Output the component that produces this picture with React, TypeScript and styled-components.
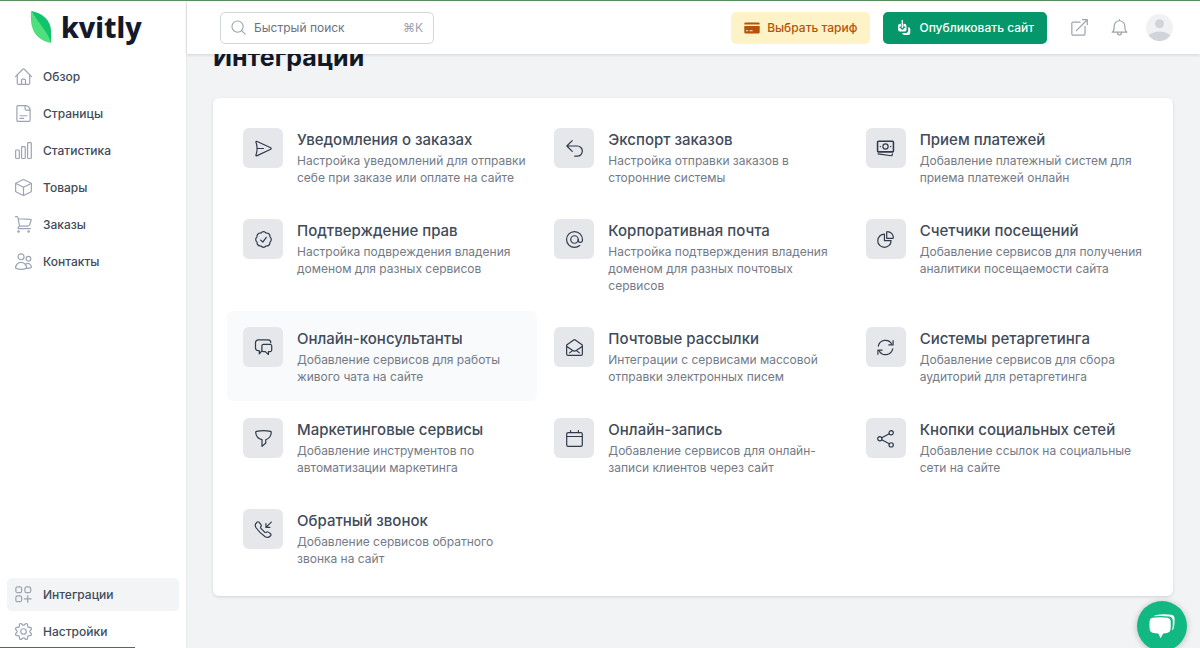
import React from "react";
import styled, { createGlobalStyle } from "styled-components";

const GlobalStyle = createGlobalStyle`
  *, *::before, *::after { box-sizing: border-box; }
  body {
    margin: 0;
    background: #f2f3f5;
    color: #414b5a;
    font-family: Inter, "Liberation Sans", sans-serif;
    font-size: 12px;
    line-height: 17px;
  }
  a { color: inherit; text-decoration: none; }
  h1, h2, p, ul { margin: 0; padding: 0; }
  button, input { font: inherit; }
`;

const Shell = styled.div`
  display: grid;
  grid-template-columns: 187px minmax(0, 1fr);
  min-height: 100vh;
  border-top: 1px solid #5a8f62;
`;

const Sidebar = styled.aside`
  position: sticky;
  top: 0;
  display: flex;
  flex-direction: column;
  height: calc(100vh - 1px);
  padding: 0 7px;
  background: #fff;
  border-right: 1px solid #e8eaed;
`;

const Brand = styled.a`
  display: flex;
  align-items: center;
  gap: 9px;
  height: 52px;
  margin-bottom: 7px;
  padding-left: 23px;
  color: #14192b;
  font-family: "Noto Sans", "Open Sans", sans-serif;
  font-size: 28px;
  font-weight: 800;
  line-height: 40px;
`;

const NavList = styled.ul<{ $bottom?: boolean }>`
  display: flex;
  flex-direction: column;
  gap: 4px;
  list-style: none;
  margin-top: ${(p) => (p.$bottom ? "auto" : "0")};
`;

const NavLink = styled.a<{ $active?: boolean }>`
  display: flex;
  align-items: center;
  gap: 11px;
  height: 33px;
  padding: 0 8px;
  border-radius: 5px;
  background: ${(p) => (p.$active ? "#f2f4f5" : "transparent")};
  font-weight: 500;
  svg { color: #9ca3b2; }
`;

const Column = styled.div`
  display: flex;
  flex-direction: column;
  min-width: 0;
`;

const Header = styled.header`
  position: sticky;
  top: 0;
  z-index: 2;
  display: flex;
  align-items: center;
  justify-content: space-between;
  height: 53px;
  padding: 0 27px 0 33px;
  background: #fff;
  box-shadow: 0 1px 3px rgba(17, 24, 39, 0.14);
`;

const SearchBox = styled.label`
  display: flex;
  align-items: center;
  gap: 8px;
  width: 214px;
  height: 32px;
  padding: 0 10px;
  border: 1px solid #d3d6dd;
  border-radius: 5px;
  color: #9ca3af;
`;

const SearchInput = styled.input`
  flex: 1;
  min-width: 0;
  padding: 0;
  border: 0;
  outline: 0;
  background: transparent;
  &::placeholder { color: #6b7280; opacity: 1; }
`;

const Shortcut = styled.kbd`
  font-family: Inter, "DejaVu Sans", sans-serif;
  font-size: 12px;
`;

const Actions = styled.div`
  display: flex;
  align-items: center;
  gap: 13px;
`;

const ActionButton = styled.button<{ $primary?: boolean }>`
  display: flex;
  align-items: center;
  gap: 7px;
  height: 32px;
  padding: 0 13px;
  border: 0;
  border-radius: 5px;
  background: ${(p) => (p.$primary ? "#059669" : "#fef3c7")};
  color: ${(p) => (p.$primary ? "#fff" : "#b45309")};
  font-weight: 500;
  cursor: pointer;
`;

const Tools = styled.div`
  display: flex;
  align-items: center;
  gap: 13px;
  margin-left: 6px;
`;

const IconButton = styled.button`
  display: grid;
  place-items: center;
  width: 27px;
  height: 27px;
  padding: 0;
  border: 0;
  border-radius: 50%;
  background: transparent;
  color: #9ca3af;
  cursor: pointer;
`;

const Main = styled.main`
  flex: 1;
  overflow: hidden;
  padding: 0 27px 40px 26px;
`;

const PageTitle = styled.h1`
  margin: -11px 0 27px;
  color: #111827;
  font-size: 25px;
  font-weight: 700;
  line-height: 28px;
`;

const Card = styled.section`
  display: grid;
  grid-template-columns: repeat(3, minmax(0, 1fr));
  gap: 1px;
  padding: 14px 13px 13px 14px;
  border-radius: 6px;
  background: #fff;
  box-shadow: 0 1px 3px rgba(17, 24, 39, 0.14);
`;

const Integration = styled.a<{ $active?: boolean }>`
  display: flex;
  align-items: flex-start;
  gap: 14px;
  padding: 16px 6px 16px 16px;
  border-radius: 6px;
  background: ${(p) => (p.$active ? "#f9fafb" : "transparent")};
`;

const Tile = styled.span`
  display: grid;
  place-items: center;
  flex: none;
  width: 40px;
  height: 40px;
  border-radius: 6px;
  background: #e5e7eb;
  color: #303a4b;
`;

const ItemTitle = styled.h2`
  font-size: 15px;
  font-weight: 500;
  line-height: 24px;
`;

const ItemText = styled.p`
  color: #737a87;
`;

const ChatButton = styled.button`
  position: fixed;
  right: 13px;
  bottom: -3px;
  z-index: 3;
  display: grid;
  place-items: center;
  width: 50px;
  height: 50px;
  padding: 0;
  border: 0;
  border-radius: 50%;
  background: #12b881;
  box-shadow: 0 1px 6px rgba(0, 0, 0, 0.25);
  cursor: pointer;
`;

const StatusEdge = styled.div`
  position: fixed;
  left: 0;
  bottom: 0;
  z-index: 4;
  width: 135px;
  height: 1px;
  background: #5c665f;
`;

const icons = {
  home: (
    <>
      <path d="M.75 12.2 10.9 1.8a1.5 1.5 0 0 1 2.2 0l10.15 10.4" />
      <path d="M3.25 9.8v11.7a1.6 1.6 0 0 0 1.6 1.6h14.3a1.6 1.6 0 0 0 1.6-1.6V9.8" />
      <path d="M9.2 23v-5.600a1.600 1.600 0 0 1 1.600-1.600h2.400a1.600 1.600 0 0 1 1.600 1.600V23" />
    </>
  ),
  page: (
    <>
      <path d="M15 .75H4.3a1.6 1.6 0 0 0-1.6 1.6v19.3a1.6 1.6 0 0 0 1.6 1.6h15.4a1.6 1.6 0 0 0 1.6-1.6V7.2Q20.6 1.2 15 .75z" />
      <path d="M14.3.9v4.6a1.6 1.6 0 0 0 1.6 1.6h5.3M7 15.2h10M7 19h5.2" />
    </>
  ),
  bars: (
    <>
      <rect x=".9" y="11.3" width="5.2" height="12" rx="1.2" />
      <rect x="9.3" y="6.6" width="5.2" height="16.7" rx="1.2" />
      <rect x="17.8" y=".8" width="5.2" height="22.5" rx="1.2" />
    </>
  ),
  cube: (
    <>
      <path d="M11.1 1.1 1.8 5.7a1.5 1.5 0 0 0-.9 1.4v9.8a1.5 1.5 0 0 0 .9 1.4l9.3 4.6a2 2 0 0 0 1.8 0l9.3-4.6a1.5 1.5 0 0 0 .9-1.4V7.1a1.5 1.5 0 0 0-.9-1.4l-9.3-4.6a2 2 0 0 0-1.800 0z" />
      <path d="m1.3 6.3 10.7 5.3 10.7-5.3M12 11.6v11.5" />
    </>
  ),
  cart: (
    <>
      <path d="M.6 1h1.8a1.8 1.8 0 0 1 1.8 1.5L6.4 14.2h11.7a2.6 2.6 0 0 0 2.5-1.9l2.3-6.5a.9.9 0 0 0-.9-1.1L4.6 3.9M6.4 14.2l-2.1 2.3a.9.9 0 0 0 .7 1.4h16.7" />
      <circle cx="5" cy="21.8" r="1" />
      <circle cx="19.2" cy="21.8" r="1" />
    </>
  ),
  users: (
    <>
      <circle cx="8.6" cy="5.3" r="4.2" />
      <circle cx="19" cy="8" r="3.3" />
      <path d="M.8 21.2c0-4.6 3.4-8 7.8-8s7.8 3.4 7.8 8c-4.6 2.4-11 2.4-15.6 0z" />
      <path d="M15.6 15.5c3.6-2.1 7.6.6 7.6 4.9-1.9 1-4.3 1.3-6.8 1.2" />
    </>
  ),
  apps: (
    <>
      <rect x="1.2" y="1.2" width="8.2" height="8.2" rx="2.5" />
      <rect x="14" y="1.2" width="8.2" height="8.2" rx="2.5" />
      <rect x="1.2" y="14" width="8.2" height="8.2" rx="2.5" />
      <path d="M18 13.5v9.5M13.3 18.2h9.5" />
    </>
  ),
  gear: (
    <>
      <circle cx="12" cy="12" r="3.9" />
      <path d="M10.546 2.438a1.957 1.957 0 0 0 2.908 0L14.4 1.4a1.959 1.959 0 0 1 3.41 1.413l-.071 1.4a1.958 1.958 0 0 0 2.051 2.057l1.4-.071A1.959 1.959 0 0 1 22.6 9.606l-1.042.94a1.96 1.96 0 0 0 0 2.909l1.042.94a1.959 1.959 0 0 1-1.413 3.41l-1.4-.071a1.958 1.958 0 0 0-2.056 2.056l.071 1.4A1.959 1.959 0 0 1 14.4 22.6l-.941-1.041a1.959 1.959 0 0 0-2.908 0L9.606 22.6A1.959 1.959 0 0 1 6.2 21.192l.072-1.4a1.958 1.958 0 0 0-2.056-2.056l-1.4.071A1.958 1.958 0 0 1 1.4 14.4l1.041-.94a1.96 1.96 0 0 0 0-2.909L1.4 9.606A1.958 1.958 0 0 1 2.813 6.2l1.4.071a1.958 1.958 0 0 0 2.056-2.058l-.072-1.4A1.959 1.959 0 0 1 9.606 1.4z" />
    </>
  ),
  search: (
    <>
      <circle cx="10.5" cy="10.5" r="9" />
      <path d="m17 17 5.7 5.7" />
    </>
  ),
  external: (
    <>
      <path d="M13 4.3H3A1.8 1.8 0 0 0 1.2 6.1v15A1.8 1.8 0 0 0 3 22.9h15a1.8 1.8 0 0 0 1.8-1.8V10.5" />
      <path d="M7.5 16.5 23 1M16 1h7v7" />
    </>
  ),
  bell: (
    <>
      <path d="M12 2.500a7.500 7.500 0 0 1 7.500 7.500c0 7.100 2.300 8.500 3 8.500h-21c.7 0 3-1.400 3-8.500A7.500 7.500 0 0 1 12 2.500zM12 2.500V1" />
      <path d="M9.200 19a2.800 3.400 0 0 0 5.600 0" />
    </>
  ),
  send: (
    <>
      <path d="M2.3 1.8 22.2 11a1.1 1.1 0 0 1 0 2L2.3 22.400a.8.8 0 0 1-1-1C3.700 14.500 3.700 9 1.300 2.700a.8.8 0 0 1 1-.9z" />
      <path d="M3 12h9" />
    </>
  ),
  undo: <path d="M8.8.9 1.2 8.5l7.6 7.6M1.2 8.5h14.7a7.2 7.2 0 0 1 0 14.4h-3.6" />,
  money: (
    <>
      <rect x=".8" y="1.8" width="22.4" height="15" rx="1.3" strokeWidth="2.2" />
      <circle cx="12" cy="9.3" r="3.7" />
      <path d="M4.600 9.300h.3M19.100 9.300h.3M1.500 19.700l18.600 2.500a1.300 1.300 0 0 0 1.400-1.200l.1-1.400" />
    </>
  ),
  badge: (
    <>
      <path d="m8 12.9 3 2.7 4.9-6.7" />
      <path d="M23 12c0 1.5-.8 2.9-1.9 3.7a4.5 4.5 0 0 1-1.3 4.1 4.5 4.5 0 0 1-4.1 1.3A4.6 4.6 0 0 1 12 23a4.6 4.6 0 0 1-3.7-1.9 4.5 4.5 0 0 1-4.1-1.3 4.5 4.5 0 0 1-1.3-4.1A4.6 4.6 0 0 1 1 12c0-1.5.8-2.9 1.9-3.7a4.5 4.5 0 0 1 1.3-4.1 4.5 4.5 0 0 1 4.1-1.3A4.6 4.6 0 0 1 12 1c1.5 0 2.9.8 3.7 1.9a4.5 4.5 0 0 1 4.1 1.3 4.5 4.5 0 0 1 1.3 4.1A4.6 4.6 0 0 1 23 12z" />
    </>
  ),
  at: (
    <>
      <circle cx="12" cy="12" r="5.3" />
      <path d="M17.3 12v1.500a3 3 0 0 0 5.900 0V12A11.200 11.200 0 1 0 12 23.200c2.800 0 5.400-1 7.300-2.700" />
    </>
  ),
  pie: (
    <>
      <path d="M10.500 4.300A9.400 9.400 0 1 0 19.900 13.700h-9.400z" />
      <path d="M13.700 1.800a.9.9 0 0 1 1-.9 8.500 8.500 0 0 1 8.400 8.400.9.9 0 0 1-.9 1h-8.500z" />
    </>
  ),
  chat: (
    <>
      <path d="M9.2 17.3 6 21v-4.5H4.700a4 4 0 0 1-4-4V5.300a4 4 0 0 1 4-4h13.600a4 4 0 0 1 4 3.900" />
      <path d="M21.300 7.700H12a2.300 2.300 0 0 0-2.300 2.300v5.500a2.300 2.300 0 0 0 2.300 2.300h2.500l4.500 4v-4h2.300a2.300 2.300 0 0 0 2.300-2.300V10a2.300 2.300 0 0 0-2.300-2.300z" />
    </>
  ),
  mail: (
    <>
      <path d="M.9 9.300a2 2 0 0 1 1-1.700L10.900 1.400a2 2 0 0 1 2.200 0l9 6.200a2 2 0 0 1 1 1.700v11.900a1.800 1.800 0 0 1-1.800 1.800H2.700a1.800 1.800 0 0 1-1.800-1.800z" />
      <path d="m1.200 10.700 8.300 5.600a4.500 4.500 0 0 0 5 0l8.300-5.600M5 19.600l4.500-3.300M19 19.600l-4.500-3.300" />
    </>
  ),
  sync: (
    <>
      <path d="M1.8 10A10.300 10.300 0 0 1 21 7.500M22.200 14A10.300 10.300 0 0 1 3 16.500" />
      <path d="M22.700 2.300v6h-6M1.300 21.700v-6h6" />
    </>
  ),
  funnel: (
    <path d="M1 3.500C.9 2.600 1.400 2.200 2.200 2c6-1.300 13.600-1.300 19.600 0 .8.2 1.300.6 1.200 1.500-.4 5-3.500 8.800-7.800 10.200v4.700l-5.300 4.700v-9.400C4.500 12.300 1.400 8.500 1 3.500z" />
  ),
  calendar: (
    <>
      <rect x="1" y="3.700" width="22" height="19.300" rx="2" />
      <path d="M1 9.200h22M6.500 1v2.700M17.500 1v2.700" />
    </>
  ),
  share: (
    <>
      <circle cx="4" cy="12.300" r="3" />
      <circle cx="20" cy="4" r="3" />
      <circle cx="20" cy="21" r="3" />
      <path d="m6.700 10.900 10.600-5.500M6.700 13.700l10.600 5.800" />
    </>
  ),
  phone: (
    <>
      <path d="m14.400 22.200.1.1a5.500 5.500 0 0 0 6.800-.8l.8-.8a1.800 1.800 0 0 0 0-2.600l-3.300-2.400a1.800 1.800 0 0 0-2.600 0 1.800 1.800 0 0 1-2.600 0l-5.200-5.300a1.800 1.800 0 0 1 0-2.600 1.800 1.800 0 0 0 0-2.600L5.500 1.600a1.800 1.800 0 0 0-2.600 0l-.8.8a5.500 5.500 0 0 0-.8 6.800 47 47 0 0 0 13.100 13z" />
      <path d="m23 1.500-7.500 7.500M15.500 3.500V9H21" />
    </>
  ),
};

type IconName = keyof typeof icons;

const Icon = ({ name, size = 17, weight = 1.7 }: { name: IconName; size?: number; weight?: number }) => (
  <svg
    width={size}
    height={size}
    viewBox="0 0 24 24"
    fill="none"
    stroke="currentColor"
    strokeWidth={weight}
    strokeLinecap="round"
    strokeLinejoin="round"
    overflow="visible"
    aria-hidden="true"
  >
    {icons[name]}
  </svg>
);

const Leaf = () => (
  <svg width="22" height="34" viewBox="0 0 22 34" aria-hidden="true">
    <path d="M1 1C13 3 21 11 21 21v12z" fill="#0fc46b" />
    <path d="M1 1C0 17 3 29 21 33 18 22 10 15 1 1z" fill="#4fe07d" />
  </svg>
);

const CreditCard = () => (
  <svg width="16" height="12" viewBox="0 0 16 12" aria-hidden="true">
    <path fill="currentColor" d="M1.5.6h13A1.200 1.200 0 0 1 15.700 1.800V2.400H.3v-.6A1.200 1.200 0 0 1 1.500.6z" />
    <path fill="currentColor" fillRule="evenodd" d="M.3 4h15.400v6.200a1.300 1.300 0 0 1-1.300 1.300H1.600A1.300 1.300 0 0 1 .3 10.200zM2 8.200v1h2.200v-1zm3.600 0v1h3v-1z" />
  </svg>
);

const PublishIcon = () => (
  <svg width="16" height="17" viewBox="0 0 16 17" aria-hidden="true">
    <path
      fill="#fff"
      d="M4.300 4.800h.7v3.200L4 7.200 3.200 8.200 6.300 11l3-2.800-.8-1-1 .8V4.800h.8a2.200 2.200 0 0 1 2.200 2.200v3.400a2.200 2.200 0 0 1-2.200 2.200h-4A2.200 2.200 0 0 1 2.100 10.400V7a2.200 2.200 0 0 1 2.200-2.200z"
    />
    <path fill="none" stroke="#fff" strokeWidth="1.300" strokeLinecap="round" d="M6.300 1.500v7" />
    <path fill="#fff" d="M12.200 8q2.100.3 2.100 2.300v3.200a2.500 2.500 0 0 1-2.500 2.500H8.500q-2 0-2.400-2h3.300a2.800 2.800 0 0 0 2.800-2.800z" />
  </svg>
);

const Avatar = () => (
  <svg width="27" height="27" viewBox="0 0 27 27" aria-hidden="true">
    <circle cx="13.500" cy="13.500" r="13.500" fill="#f0f1f3" />
    <circle cx="13.500" cy="9.800" r="4.500" fill="#d1d5db" />
    <path d="M2.500 21.300c5.500-5.100 16.500-5.100 22 0a13.500 13.500 0 0 1-22 0z" fill="#d1d5db" />
  </svg>
);

const ChatBubbles = () => (
  <svg width="28" height="28" viewBox="0 0 28 28" aria-hidden="true">
    <path fill="#fff" d="M7 3.300Q15 1.300 23.500 2.800 26.500 3.300 26.600 7q.2 6-1 9.500-.6 1.600-1.600 1.800 1.200-4 .8-9.800-.3-3.700-3.600-4.100Q13 3.600 6 4.300z" />
    <path fill="#fff" d="M4.500 5.800q8-1.100 15.200 0 2.600.4 2.900 3 .5 5-.2 9.200-.4 2.300-2.700 2.800-2.200.5-4.500.6l-2.600 4.800-2.300-4.800q-3 0-5.800-.6-2.300-.5-2.700-2.800-.7-4.700-.2-9.200.3-2.600 2.900-3z" />
  </svg>
);

const mainNav: { icon: IconName; label: string }[] = [
  { icon: "home", label: "Обзор" },
  { icon: "page", label: "Страницы" },
  { icon: "bars", label: "Статистика" },
  { icon: "cube", label: "Товары" },
  { icon: "cart", label: "Заказы" },
  { icon: "users", label: "Контакты" },
];

const bottomNav: { icon: IconName; label: string; active?: boolean }[] = [
  { icon: "apps", label: "Интеграции", active: true },
  { icon: "gear", label: "Настройки" },
];

const integrations: { icon: IconName; title: string; text: string; active?: boolean }[] = [
  { icon: "send", title: "Уведомления о заказах", text: "Настройка уведомлений для отправки себе при заказе или оплате на сайте" },
  { icon: "undo", title: "Экспорт заказов", text: "Настройка отправки заказов в сторонние системы" },
  { icon: "money", title: "Прием платежей", text: "Добавление платежный систем для приема платежей онлайн" },
  { icon: "badge", title: "Подтверждение прав", text: "Настройка подвреждения владения доменом для разных сервисов" },
  { icon: "at", title: "Корпоративная почта", text: "Настройка подтверждения владения доменом для разных почтовых сервисов" },
  { icon: "pie", title: "Счетчики посещений", text: "Добавление сервисов для получения аналитики посещаемости сайта" },
  { icon: "chat", title: "Онлайн-консультанты", text: "Добавление сервисов для работы живого чата на сайте", active: true },
  { icon: "mail", title: "Почтовые рассылки", text: "Интеграции с сервисами массовой отправки электронных писем" },
  { icon: "sync", title: "Системы ретаргетинга", text: "Добавление сервисов для сбора аудиторий для ретаргетинга" },
  { icon: "funnel", title: "Маркетинговые сервисы", text: "Добавление инструментов по автоматизации маркетинга" },
  { icon: "calendar", title: "Онлайн-запись", text: "Добавление сервисов для онлайн-записи клиентов через сайт" },
  { icon: "share", title: "Кнопки социальных сетей", text: "Добавление ссылок на социальные сети на сайте" },
  { icon: "phone", title: "Обратный звонок", text: "Добавление сервисов обратного звонка на сайт" },
];

export default function App() {
  return (
    <>
      <GlobalStyle />
      <Shell>
        <Sidebar>
          <Brand href="#">
            <Leaf />
            kvitly
          </Brand>
          <nav>
            <NavList>
              {mainNav.map((item) => (
                <li key={item.label}>
                  <NavLink href="#">
                    <Icon name={item.icon} />
                    {item.label}
                  </NavLink>
                </li>
              ))}
            </NavList>
          </nav>
          <NavList $bottom>
            {bottomNav.map((item) => (
              <li key={item.label}>
                <NavLink href="#" $active={item.active}>
                  <Icon name={item.icon} />
                  {item.label}
                </NavLink>
              </li>
            ))}
          </NavList>
        </Sidebar>
        <Column>
          <Header>
            <SearchBox>
              <Icon name="search" size={15} />
              <SearchInput type="text" placeholder="Быстрый поиск" aria-label="Быстрый поиск" />
              <Shortcut>⌘K</Shortcut>
            </SearchBox>
            <Actions>
              <ActionButton type="button">
                <CreditCard />
                Выбрать тариф
              </ActionButton>
              <ActionButton type="button" $primary>
                <PublishIcon />
                Опубликовать сайт
              </ActionButton>
              <Tools>
                <IconButton type="button" aria-label="Открыть сайт">
                  <Icon name="external" />
                </IconButton>
                <IconButton type="button" aria-label="Оповещения">
                  <Icon name="bell" />
                </IconButton>
                <IconButton type="button" aria-label="Профиль">
                  <Avatar />
                </IconButton>
              </Tools>
            </Actions>
          </Header>
          <Main>
            <PageTitle>Интеграции</PageTitle>
            <Card>
              {integrations.map((item) => (
                <Integration key={item.title} href="#" $active={item.active}>
                  <Tile>
                    <Icon name={item.icon} />
                  </Tile>
                  <div>
                    <ItemTitle>{item.title}</ItemTitle>
                    <ItemText>{item.text}</ItemText>
                  </div>
                </Integration>
              ))}
            </Card>
          </Main>
        </Column>
      </Shell>
      <ChatButton type="button" aria-label="Чат">
        <ChatBubbles />
      </ChatButton>
      <StatusEdge />
    </>
  );
}
